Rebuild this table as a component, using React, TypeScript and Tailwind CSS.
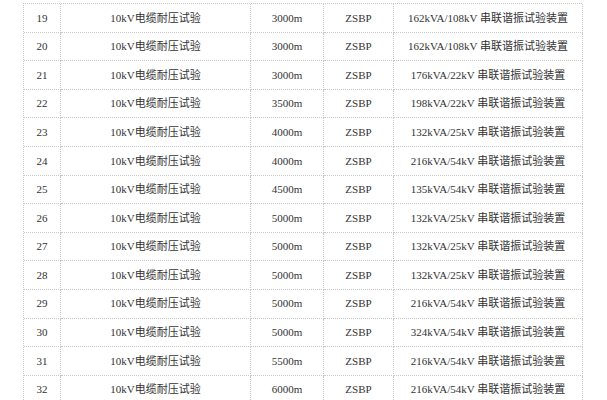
const rows = [
  ['19', '3000m', '162kVA/108kV'],
  ['20', '3000m', '162kVA/108kV'],
  ['21', '3000m', '176kVA/22kV'],
  ['22', '3500m', '198kVA/22kV'],
  ['23', '4000m', '132kVA/25kV'],
  ['24', '4000m', '216kVA/54kV'],
  ['25', '4500m', '135kVA/54kV'],
  ['26', '5000m', '132kVA/25kV'],
  ['27', '5000m', '132kVA/25kV'],
  ['28', '5000m', '132kVA/25kV'],
  ['29', '5000m', '216kVA/54kV'],
  ['30', '5000m', '324kVA/54kV'],
  ['31', '5500m', '216kVA/54kV'],
  ['32', '6000m', '216kVA/54kV'],
]

const cell = 'flex items-center justify-center border-r border-b border-dotted border-[#c8c8c8]'

export default function App() {
  return (
    <div
      className="w-[607px] h-[400px] overflow-hidden bg-white pt-[3px] pl-[23px] text-[11px] text-[#333]"
      style={{ fontFamily: '"Liberation Serif", "Noto Sans CJK SC", serif' }}
    >
      <div className="w-[559px] border-t border-l border-dotted border-[#c8c8c8]">
        {rows.map(([no, len, spec]) => (
          <div key={no} className="grid grid-cols-[37px_190px_73px_70px_189px] h-[28.6px]">
            <div className={cell}>{no}</div>
            <div className={cell}>10kV电缆耐压试验</div>
            <div className={cell}>{len}</div>
            <div className={cell}>ZSBP</div>
            <div className={cell}>{spec} 串联谐振试验装置</div>
          </div>
        ))}
      </div>
    </div>
  )
}
